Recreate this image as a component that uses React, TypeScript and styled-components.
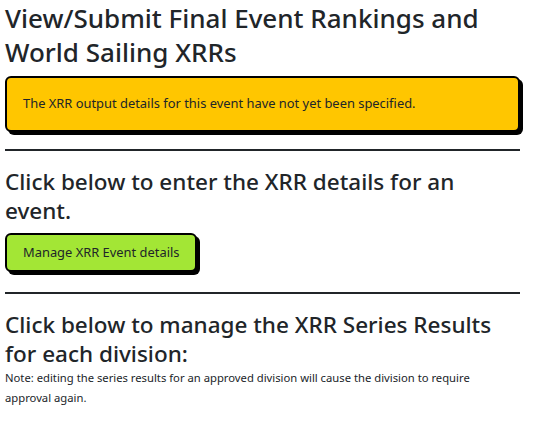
import React from 'react'
import { createGlobalStyle, styled } from 'styled-components'

const GlobalStyle = createGlobalStyle`
body {
  margin: 0;
  font-family: "Noto Sans", "Open Sans", sans-serif;
  font-size: 12.9px;
  line-height: 19.5px;
  color: #212529;
  background: #fff;
}
`

const App = () => {
  return (
    <>
      <GlobalStyle />
      <Page>
        <PageTitle>View/Submit Final Event Rankings and World Sailing XRRs</PageTitle>
        <NoticeBox>The XRR output details for this event have not yet been specified.</NoticeBox>

        <Divider $top={17} />
        <SectionTitle>Click below to enter the XRR details for an event.</SectionTitle>
        <ActionRow>
          <ActionButton type="button">Manage XRR Event details</ActionButton>
        </ActionRow>

        <Divider $top={20} />
        <SectionTitle $last>Click below to manage the XRR Series Results for each division:</SectionTitle>
        <Note>
          <small>Note: editing the series results for an approved division will cause the division to require approval again.</small>
        </Note>
      </Page>
    </>
  )
}

export default App

const Page = styled.div`
width: 515px;
padding: 1px 5px 0;
`
const PageTitle = styled.h2`
margin: 0 0 7px;
font-size: 26px;
font-weight: 500;
line-height: 34px;
`
const NoticeBox = styled.div`
background: #ffc600;
border: 2px solid #000;
border-radius: 6px;
box-shadow: 3px 3px 0 #000;
padding: 16px;
`
const Divider = styled.hr<{ $top: number }>`
margin: ${p => p.$top}px 0 16px;
border: 0;
border-top: 2px solid #212529;
opacity: 1;
`
const SectionTitle = styled.h3<{ $last?: boolean }>`
margin: 0 0 ${p => (p.$last ? 0 : 8)}px;
font-size: 22.5px;
font-weight: 500;
line-height: 29px;
`
const ActionRow = styled.div`
display: flex;
`
const ActionButton = styled.button`
font-family: inherit;
font-size: 12.9px;
line-height: 19.5px;
color: #212529;
background: #a3e635;
border: 2px solid #000;
border-radius: 6px;
box-shadow: 3px 3px 0 #000;
padding: 8px 16px;
cursor: pointer;
`
const Note = styled.p`
margin: 0;
max-width: 500px;
small {
  font-size: 11.25px;
}
`
